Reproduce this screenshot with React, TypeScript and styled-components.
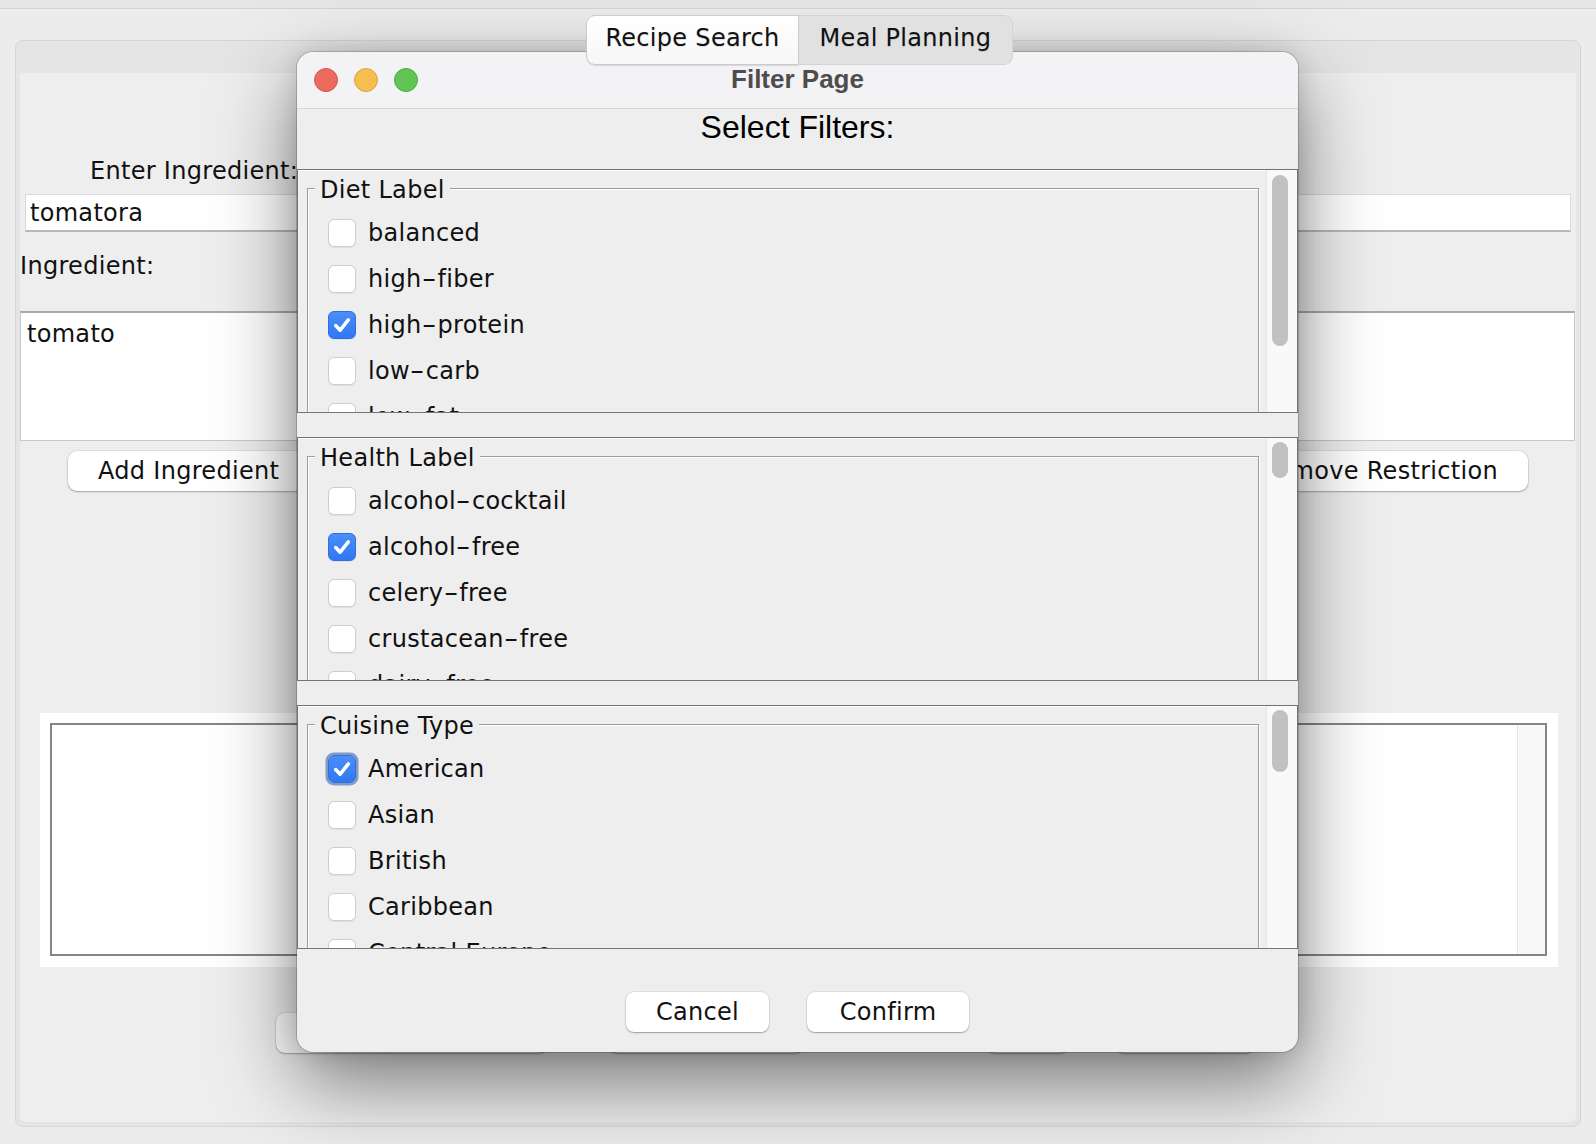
import React from 'react';
import styled, { createGlobalStyle } from 'styled-components';

const GlobalStyle = createGlobalStyle`
  * { box-sizing: border-box; }
  html, body { margin: 0; padding: 0; }
  body {
    background: #ececec;
    font-family: "DejaVu Sans", "Liberation Sans", sans-serif;
    letter-spacing: 0.3px;
    color: #111;
  }
`;

const Screen = styled.div`
  position: relative;
  width: 1596px;
  height: 1144px;
  overflow: hidden;
  background: #ececec;
  display: flex;
  flex-direction: column;
`;

const TopStrip = styled.div`
  flex: none;
  height: 9px;
  background: #e6e6e6;
  border-bottom: 1px solid #d3d3d3;
`;

const TabArea = styled.div`
  flex: 1;
  display: flex;
  flex-direction: column;
  padding: 0 15px;
`;

const TabRow = styled.div`
  position: relative;
  z-index: 1;
  display: flex;
  justify-content: center;
  margin-top: 6px;
  height: 50px;
  padding-left: 3px;
`;

const Tab = styled.div<{ $selected?: boolean; $w: number }>`
  width: ${(p) => p.$w}px;
  height: 50px;
  padding-top: 8px;
  text-align: center;
  font-size: 24px;
  line-height: 28px;
  color: #111;
  text-shadow: 0 1px 1px rgba(0, 0, 0, 0.12);
  background: ${(p) => (p.$selected ? 'linear-gradient(#ffffff, #f7f7f7)' : '#e1e1e1')};
  border: 1px solid ${(p) => (p.$selected ? '#cbcbcb' : '#d3d3d3')};
  border-left-width: ${(p) => (p.$selected ? 1 : 0)}px;
  border-radius: ${(p) => (p.$selected ? '9px 0 0 9px' : '0 9px 9px 0')};
  box-shadow: ${(p) => (p.$selected ? '0 1px 1px rgba(0,0,0,0.12)' : 'none')};
`;

const TabbedPane = styled.div`
  margin-top: -25px;
  height: 1087px;
  display: flex;
  flex-direction: column;
  border: 1px solid #d6d6d6;
  border-radius: 8px;
  background: #e5e5e5;
  padding: 32px 4px 4px 4px;
`;

const InnerPanel = styled.div`
  flex: 1;
  display: flex;
  flex-direction: column;
  background: #eeeeee;
  border-radius: 0 0 6px 6px;
`;

const FieldLabel = styled.div<{ $indent: number; $top: number }>`
  margin-top: ${(p) => p.$top}px;
  padding-left: ${(p) => p.$indent}px;
  font-size: 24px;
  line-height: 28px;
  color: #111;
`;

const TextField = styled.div`
  margin: 9px 5px 0;
  height: 38px;
  background: #fff;
  border: 1px solid #dadada;
  border-bottom: 2px solid #b8b8b8;
  padding: 2px 4px 0;
  font-size: 24px;
  line-height: 33px;
  color: #111;
`;

const TextArea = styled.div`
  margin: 31px 1px 0 0;
  height: 130px;
  background: #fff;
  border: 1px solid #c8c8c8;
  border-top: 2px solid #a9a9a9;
  padding: 7px 6px;
  font-size: 24px;
  line-height: 28px;
  color: #111;
`;

const ButtonRow = styled.div`
  margin-top: 10px;
  height: 40px;
  padding: 0 48px;
  display: flex;
  justify-content: space-between;
`;

const BgButton = styled.div<{ $w?: number; $ml?: number }>`
  height: 40px;
  ${(p) => (p.$w ? `width: ${p.$w}px;` : 'padding: 0 30px;')}
  margin-left: ${(p) => p.$ml ?? 0}px;
  background: #fff;
  border-radius: 9px;
  box-shadow: 0 1px 2px rgba(0, 0, 0, 0.28), 0 0 0 0.5px rgba(0, 0, 0, 0.1);
  font-size: 24px;
  line-height: 40px;
  color: #111;
  white-space: nowrap;
`;

const ListOuter = styled.div`
  margin: 222px 18px 0 20px;
  height: 254px;
  background: #fff;
  padding: 10px 11px 11px 10px;
`;

const ListInner = styled.div`
  height: 100%;
  border: 2px solid #858585;
  display: flex;
  justify-content: flex-end;
`;

const ListTrack = styled.div`
  width: 28px;
  background: #f9f9f9;
  border-left: 1px solid #e6e6e6;
`;

const BottomRow = styled.div`
  margin-top: 46px;
  height: 41px;
  padding-left: 256px;
  display: flex;
`;

/* ---------- Dialog ---------- */

const Dialog = styled.div`
  position: absolute;
  left: 297px;
  top: 52px;
  width: 1001px;
  height: 1000px;
  border-radius: 16px;
  background: #eeeeee;
  overflow: hidden;
  display: flex;
  flex-direction: column;
  box-shadow: 0 30px 80px rgba(0, 0, 0, 0.5), 0 0 24px rgba(0, 0, 0, 0.12),
    0 0 0 1px rgba(0, 0, 0, 0.18);
`;

const TitleBar = styled.div`
  flex: none;
  height: 57px;
  display: grid;
  grid-template-columns: 1fr auto 1fr;
  align-items: center;
  background: #f3f3f5;
  border-bottom: 1px solid #d7d7d7;
`;

const Lights = styled.div`
  display: flex;
  gap: 16px;
  padding-left: 17px;
`;

const Light = styled.span<{ $fill: string; $edge: string }>`
  width: 24px;
  height: 24px;
  border-radius: 50%;
  background: ${(p) => p.$fill};
  border: 1px solid ${(p) => p.$edge};
`;

const DialogTitle = styled.div`
  font-family: "Liberation Sans", Arial, sans-serif;
  font-weight: 700;
  font-size: 26px;
  letter-spacing: 0;
  color: #4d4d4d;
  padding-bottom: 2px;
`;

const Header = styled.div`
  flex: none;
  font-family: "Liberation Sans", Arial, sans-serif;
  font-size: 32px;
  letter-spacing: 0;
  line-height: 36px;
  text-align: center;
  color: #000;
  padding-bottom: 24px;
`;

const PaneStack = styled.div`
  flex: none;
  display: grid;
  grid-template-rows: repeat(3, 244px);
  row-gap: 24px;
`;

const Pane = styled.div`
  display: flex;
  border: 1px solid #747474;
  background: #eeeeee;
  overflow: hidden;
  box-shadow: inset 0 1px 0 #ffffff;
`;

const Viewport = styled.div`
  flex: 1;
  overflow: hidden;
  padding: 3px 7px 0 9px;
`;

const Group = styled.fieldset`
  margin: 0;
  min-width: 0;
  padding: 0 0 0 7px;
  border: 1px solid #9c9c9c;
  box-shadow: inset 1px 1px 0 #ffffff, 1px 1px 0 #ffffff;
`;

const GroupTitle = styled.legend`
  padding: 3px 5px 0;
  font-size: 24px;
  line-height: 28px;
  color: #111;
  background: #eeeeee;
`;

const OptionList = styled.div`
  padding: 6px 0 0 13px;
  display: flex;
  flex-direction: column;
`;

const OptionRow = styled.label`
  height: 46px;
  display: flex;
  align-items: center;
  gap: 12px;
  font-size: 24px;
  line-height: 28px;
  color: #111;
  white-space: nowrap;
`;

const Dash = styled.span`
  display: inline-block;
  margin: 0 3.5px;
  transform: scaleX(1.7);
`;

const Box = styled.span<{ $checked?: boolean; $focused?: boolean }>`
  flex: none;
  width: 28px;
  height: 28px;
  border-radius: 6px;
  display: flex;
  align-items: center;
  justify-content: center;
  background: ${(p) => (p.$checked ? 'linear-gradient(#4a8ef9, #3177f2)' : '#ffffff')};
  border: 1px solid ${(p) => (p.$checked ? '#2e6fe0' : '#cdcdcd')};
  box-shadow: ${(p) =>
    p.$focused
      ? '0 0 0 2.5px rgba(95, 125, 180, 0.75)'
      : '0 1px 1px rgba(0, 0, 0, 0.06)'};
`;

const Track = styled.div`
  flex: none;
  width: 31px;
  background: #f9f9f9;
  border-left: 1px solid #e6e6e6;
  padding-left: 5px;
`;

const Thumb = styled.div<{ $top: number; $h: number }>`
  width: 16px;
  height: ${(p) => p.$h}px;
  margin-top: ${(p) => p.$top}px;
  border-radius: 8px;
  background: #c1c1c1;
`;

const Footer = styled.div`
  flex: 1;
  display: flex;
  justify-content: center;
  align-items: flex-start;
  gap: 38px;
  padding-top: 43px;
`;

const DialogButton = styled.div<{ $w: number }>`
  width: ${(p) => p.$w}px;
  height: 40px;
  background: #ffffff;
  border-radius: 8px;
  box-shadow: 0 1px 1.5px rgba(0, 0, 0, 0.3), 0 0 0 0.5px rgba(0, 0, 0, 0.12);
  font-size: 24px;
  line-height: 40px;
  text-align: center;
  color: #111;
`;

const Check = () => (
  <svg width="28" height="28" viewBox="0 0 28 28">
    <path
      d="M7.2 14.6 L12 19.6 L20.8 8.4"
      fill="none"
      stroke="#ffffff"
      strokeWidth="3.8"
      strokeLinecap="round"
      strokeLinejoin="round"
    />
  </svg>
);

const renderLabel = (text: string) => {
  const parts = text.split('-');
  return parts.map((part, i) => (
    <React.Fragment key={i}>
      {i > 0 && <Dash>-</Dash>}
      {part}
    </React.Fragment>
  ));
};

type Option = { label: string; checked?: boolean; focused?: boolean };

type Section = { title: string; thumbTop: number; thumbH: number; options: Option[] };

const sections: Section[] = [
  {
    title: 'Diet Label',
    thumbTop: 5,
    thumbH: 171,
    options: [
      { label: 'balanced' },
      { label: 'high-fiber' },
      { label: 'high-protein', checked: true },
      { label: 'low-carb' },
      { label: 'low-fat' },
      { label: 'low-sodium' },
    ],
  },
  {
    title: 'Health Label',
    thumbTop: 4,
    thumbH: 36,
    options: [
      { label: 'alcohol-cocktail' },
      { label: 'alcohol-free', checked: true },
      { label: 'celery-free' },
      { label: 'crustacean-free' },
      { label: 'dairy-free' },
      { label: 'DASH' },
    ],
  },
  {
    title: 'Cuisine Type',
    thumbTop: 4,
    thumbH: 62,
    options: [
      { label: 'American', checked: true, focused: true },
      { label: 'Asian' },
      { label: 'British' },
      { label: 'Caribbean' },
      { label: 'Central Europe' },
      { label: 'Chinese' },
    ],
  },
];

export default function App() {
  return (
    <>
      <GlobalStyle />
      <Screen>
        <TopStrip />
        <TabArea>
          <TabRow>
            <Tab $selected $w={213}>Recipe Search</Tab>
            <Tab $w={214}>Meal Planning</Tab>
          </TabRow>
          <TabbedPane>
            <InnerPanel>
              <FieldLabel $indent={70} $top={84}>Enter Ingredient:</FieldLabel>
              <TextField>tomatora</TextField>
              <FieldLabel $indent={0} $top={20}>Ingredient:</FieldLabel>
              <TextArea>tomato</TextArea>
              <ButtonRow>
                <BgButton>Add Ingredient</BgButton>
                <BgButton>Remove Restriction</BgButton>
              </ButtonRow>
              <ListOuter>
                <ListInner>
                  <ListTrack />
                </ListInner>
              </ListOuter>
              <BottomRow>
                <BgButton $w={272} />
                <BgButton $w={196} $ml={60} />
                <BgButton $w={83} $ml={182} />
                <BgButton $w={140} $ml={46} />
              </BottomRow>
            </InnerPanel>
          </TabbedPane>
        </TabArea>

        <Dialog>
          <TitleBar>
            <Lights>
              <Light $fill="#ed6a5e" $edge="#d4564a" />
              <Light $fill="#f5bf4f" $edge="#d9a33e" />
              <Light $fill="#61c554" $edge="#4fa942" />
            </Lights>
            <DialogTitle>Filter Page</DialogTitle>
            <span />
          </TitleBar>
          <Header>Select Filters:</Header>
          <PaneStack>
            {sections.map((s) => (
              <Pane key={s.title}>
                <Viewport>
                  <Group>
                    <GroupTitle>{s.title}</GroupTitle>
                    <OptionList>
                      {s.options.map((o) => (
                        <OptionRow key={o.label}>
                          <Box $checked={o.checked} $focused={o.focused}>
                            {o.checked && <Check />}
                          </Box>
                          <span>{renderLabel(o.label)}</span>
                        </OptionRow>
                      ))}
                    </OptionList>
                  </Group>
                </Viewport>
                <Track>
                  <Thumb $top={s.thumbTop} $h={s.thumbH} />
                </Track>
              </Pane>
            ))}
          </PaneStack>
          <Footer>
            <DialogButton $w={143}>Cancel</DialogButton>
            <DialogButton $w={162}>Confirm</DialogButton>
          </Footer>
        </Dialog>
      </Screen>
    </>
  );
}
